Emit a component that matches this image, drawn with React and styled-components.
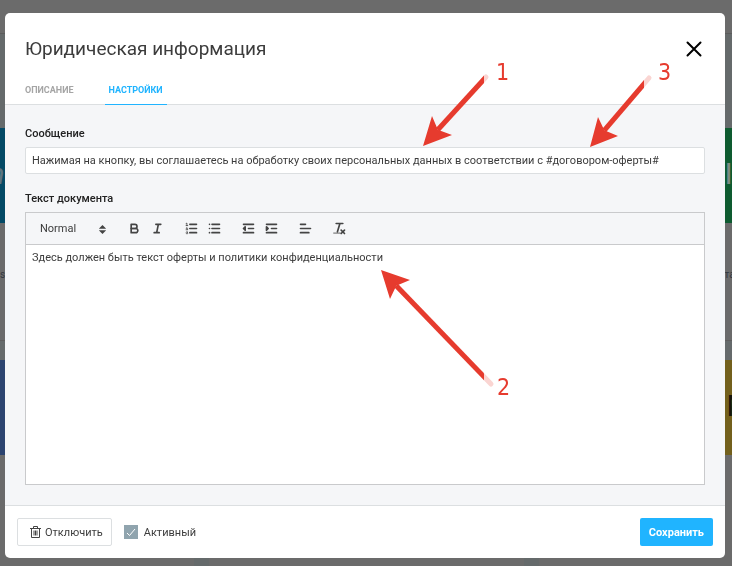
import { useState } from "react";
import styled, { createGlobalStyle } from "styled-components";

const COLORS = {
  accent: "#20b4ff",
  arrow: "#e63b2e",
  text: "#3c3c3c",
  panel: "#f5f6f8",
  line: "#dcdfe1",
  editorLine: "#c9cacc",
  backdrop: "#6b6b6b",
};

const courses = [
  { label: "n", caption: "as", color: "#044a66", ink: "#5d7580", italic: true },
  { color: "#6b6b6b" },
  { label: "IT", caption: "та", color: "#0e5b30", ink: "#7d8c83", offset: 186 },
  { caption: "к", color: "#2c4470" },
  { color: "#6b6b6b" },
  { label: "М", color: "#73601c", ink: "#17150a", offset: 188 },
];

const ARROWS = [
  { id: "arrow-message", tip: [418, 133], left: [427, 103], right: [447, 122], end: [481, 64], cut: 479 },
  { id: "arrow-offer", tip: [585, 134], left: [593, 104], right: [613, 123], end: [644, 65], cut: 639 },
  { id: "arrow-document", tip: [376, 257], left: [385, 286], right: [405, 267], end: [486, 371], cut: 479 },
];

const NECK = 22;

const NOTES = [
  { text: "1", x: 491, y: 47 },
  { text: "3", x: 653, y: 47 },
  { text: "2", x: 492, y: 362 },
];

function Arrow({ id, tip, left, right, end, cut }) {
  const dx = end[0] - tip[0];
  const dy = end[1] - tip[1];
  const ratio = NECK / Math.hypot(dx, dy);
  const neck = [tip[0] + dx * ratio, tip[1] + dy * ratio];
  const line = { x1: neck[0], y1: neck[1], x2: end[0], y2: end[1] };

  return (
    <g>
      <clipPath id={id}>
        <rect x="0" y="0" width={cut} height="545" />
      </clipPath>
      <line {...line} stroke="#fad5d2" strokeWidth="5" strokeLinecap="round" />
      <line {...line} stroke={COLORS.arrow} strokeWidth="5" clipPath={`url(#${id})`} />
      <polygon points={[tip, left, neck, right].join(" ")} fill={COLORS.arrow} />
    </g>
  );
}

function App() {
  const [tab, setTab] = useState("settings");
  const [active, setActive] = useState(true);

  return (
    <>
      <GlobalStyle />
      <Page aria-hidden="true">
        <TopBar />
        <Courses>
          {courses.map((course, index) => (
            <Course key={index}>
              <Cover $color={course.color} $ink={course.ink} $offset={course.offset} $italic={course.italic}>
                {course.label}
              </Cover>
              <Caption $offset={course.offset}>{course.caption}</Caption>
            </Course>
          ))}
        </Courses>
      </Page>
      <Overlay>
        <Modal role="dialog" aria-labelledby="modal-title">
          <Header>
            <TitleRow>
              <Title id="modal-title">Юридическая информация</Title>
              <CloseButton type="button" aria-label="Закрыть">
                <svg width="16" height="16" viewBox="0 0 16 16" stroke="#000" strokeWidth="2" strokeLinecap="round">
                  <path d="M1.5 1.5l13 13M14.5 1.5l-13 13" />
                </svg>
              </CloseButton>
            </TitleRow>
            <Tabs role="tablist">
              <Tab type="button" role="tab" $active={tab === "about"} onClick={() => setTab("about")}>
                Описание
              </Tab>
              <Tab type="button" role="tab" $active={tab === "settings"} onClick={() => setTab("settings")}>
                Настройки
              </Tab>
            </Tabs>
          </Header>
          <Body>
            <Label htmlFor="message">Сообщение</Label>
            <Input
              id="message"
              defaultValue="Нажимая на кнопку, вы соглашаетесь на обработку своих персональных данных в соответствии с #договором-оферты#"
            />
            <Label htmlFor="document">Текст документа</Label>
            <Toolbar>
              <FormatWrapper>
                <Format aria-label="Формат">
                  <option>Normal</option>
                </Format>
                <Picker viewBox="0 0 18 18">
                  <polygon points="7 11 9 13 11 11 7 11" />
                  <polygon points="7 7 9 5 11 7 7 7" />
                </Picker>
              </FormatWrapper>
              <Group>
                <Tool type="button" aria-label="Жирный">
                  <Icon viewBox="0 0 18 18">
                    <path d="M5,4H9.5A2.5,2.5,0,0,1,12,6.5v0A2.5,2.5,0,0,1,9.5,9H5A0,0,0,0,1,5,9V4A0,0,0,0,1,5,4Z" />
                    <path d="M5,9h5.5A2.5,2.5,0,0,1,13,11.5v0A2.5,2.5,0,0,1,10.5,14H5a0,0,0,0,1,0,0V9A0,0,0,0,1,5,9Z" />
                  </Icon>
                </Tool>
                <Tool type="button" aria-label="Курсив">
                  <Icon viewBox="0 0 18 18">
                    <path d="M7 4h6M5 14h6M8 14l2-10" />
                  </Icon>
                </Tool>
              </Group>
              <Group>
                <Tool type="button" aria-label="Нумерованный список">
                  <Icon viewBox="0 0 18 18">
                    <path d="M7 4h8M7 9h8M7 14h8" />
                    <path strokeWidth="1" d="M2.5 5.5h2M3.5 5.5v-3l-1 .5M2.5 10.5h2c0-1.3-1.9-.9-1.9-1.9 0-.9 1.8-.9 1.8.1M2.5 14.7c0 1 2 1 2 0 0-.5-.4-.7-1-.7.6 0 .9-.3.9-.7 0-.8-1.8-.8-1.8 0" />
                  </Icon>
                </Tool>
                <Tool type="button" aria-label="Маркированный список">
                  <Icon viewBox="0 0 18 18">
                    <path d="M6 4h9M6 9h9M6 14h9M3 4h0M3 9h0M3 14h0" />
                  </Icon>
                </Tool>
              </Group>
              <Group>
                <Tool type="button" aria-label="Уменьшить отступ">
                  <Icon viewBox="0 0 18 18">
                    <path d="M3 14h12M3 4h12M9 9h6" />
                    <polygon fill="#444" points="5 7 5 11 3 9 5 7" />
                  </Icon>
                </Tool>
                <Tool type="button" aria-label="Увеличить отступ">
                  <Icon viewBox="0 0 18 18">
                    <path d="M3 14h12M3 4h12M9 9h6" />
                    <polygon fill="#444" points="3 7 3 11 5 9 3 7" />
                  </Icon>
                </Tool>
              </Group>
              <Group>
                <Tool type="button" aria-label="Выравнивание">
                  <Icon viewBox="0 0 18 18">
                    <path d="M3 9h12M3 14h10M3 4h6" />
                  </Icon>
                </Tool>
              </Group>
              <Group>
                <Tool type="button" aria-label="Очистить формат">
                  <Icon viewBox="0 0 18 18">
                    <path d="M5 3h8M6.5 13L9.5 3M11 11l4 4M15 11l-4 4" />
                    <path strokeWidth="1" d="M2 14.5h8" />
                  </Icon>
                </Tool>
              </Group>
            </Toolbar>
            <Editor id="document" defaultValue="Здесь должен быть текст оферты и политики конфиденциальности" />
          </Body>
          <Footer>
            <DisableButton type="button">
              <svg width="11" height="12" viewBox="0 0 11 12" fill="none" stroke="#444">
                <path d="M0 2.5h11M3.5 2V.5h4V2M1.500 2.500v9h8v-9M4 4.500v5M5.500 4.500v5M7 4.500v5" />
              </svg>
              Отключить
            </DisableButton>
            <CheckLabel>
              <Checkbox type="checkbox" checked={active} onChange={() => setActive(!active)} />
              <CheckMark viewBox="0 0 14 14">
                <path d="M3 8l2.500 2.500L11 4" />
              </CheckMark>
              Активный
            </CheckLabel>
            <SaveButton type="button">Сохранить</SaveButton>
          </Footer>
          <Arrows viewBox="0 0 720 545">
            {ARROWS.map((arrow) => (
              <Arrow key={arrow.id} {...arrow} />
            ))}
          </Arrows>
          {NOTES.map(({ text, x, y }) => (
            <Note key={text} $x={x} $y={y}>
              {text}
            </Note>
          ))}
        </Modal>
      </Overlay>
    </>
  );
}

const GlobalStyle = createGlobalStyle`
  * {
    box-sizing: border-box;
  }

  body {
    margin: 0;
    font-family: Roboto, "Liberation Sans", sans-serif;
    font-size: 11px;
    color: ${COLORS.text};
    background-color: ${COLORS.backdrop};
  }

  button, input, select, textarea {
    font: inherit;
    color: inherit;
  }
`;

const Page = styled.div`
  height: 100vh;
  overflow: hidden;
  background-color: #656a6b;
`;

const TopBar = styled.div`
  height: 34px;
  background-color: ${COLORS.backdrop};
  border-bottom: 1px solid #5c5c5c;
`;

const Courses = styled.div`
  display: grid;
  grid-template-columns: repeat(3, 315px);
  gap: 19px 15px;
  justify-content: center;
  padding-top: 94px;
`;

const Course = styled.div`
  height: 213px;
  background-color: ${COLORS.backdrop};
  border-bottom: 1px solid #5e5e5e;
`;

const Cover = styled.div`
  height: 95px;
  padding-top: 28px;
  padding-left: ${(props) => props.$offset || 110}px;
  background-color: ${(props) => props.$color};
  color: ${(props) => props.$ink};
  font-size: 30px;
  font-style: ${(props) => (props.$italic ? "italic" : "normal")};
`;

const Caption = styled.div`
  padding-top: 46px;
  padding-left: ${(props) => props.$offset || 116}px;
  font-size: 10px;
  color: #34383f;
`;

const Overlay = styled.div`
  position: fixed;
  inset: 0;
  padding: 13px 7px 8px 5px;
  overflow: auto;
`;

const Modal = styled.section`
  position: relative;
  background-color: #fff;
  border-radius: 5px;
  overflow: hidden;
`;

const Header = styled.header`
  padding: 20px 20px 0;
  border-bottom: 1px solid ${COLORS.line};
`;

const TitleRow = styled.div`
  display: flex;
  align-items: center;
  justify-content: space-between;
  height: 32px;
`;

const Title = styled.h1`
  margin: 0;
  font-size: 19px;
  line-height: 24px;
  font-weight: 400;
`;

const CloseButton = styled.button`
  display: flex;
  padding: 3px;
  border: none;
  background: none;
  cursor: pointer;
`;

const Tabs = styled.div`
  display: flex;
  gap: 27px;
  margin: 11px 0 -1px -4px;
`;

const Tab = styled.button`
  height: 29px;
  padding: 0 4px;
  border: none;
  border-bottom: 1px solid ${(props) => (props.$active ? COLORS.accent : "transparent")};
  background: none;
  color: ${(props) => (props.$active ? COLORS.accent : "#a5a5a5")};
  font-size: 9px;
  font-weight: 700;
  text-transform: uppercase;
  cursor: pointer;
`;

const Body = styled.div`
  padding: 20px;
  background-color: ${COLORS.panel};
`;

const Label = styled.label`
  display: block;
  margin-bottom: 4px;
  line-height: 18px;
  font-weight: 500;
  color: #222;
`;

const Input = styled.input`
  display: block;
  width: 100%;
  height: 27px;
  margin-bottom: 16px;
  padding: 0 6px;
  border: 1px solid ${COLORS.line};
  border-radius: 2px;
  background-color: #fff;
`;

const Toolbar = styled.div`
  display: flex;
  align-items: center;
  height: 33px;
  padding: 0 8px;
  border: 1px solid ${COLORS.editorLine};
`;

const FormatWrapper = styled.div`
  position: relative;
  width: 79px;
  margin-right: 10px;
`;

const Format = styled.select`
  width: 100%;
  padding: 0 6px;
  border: none;
  background: none;
  appearance: none;
`;

const Picker = styled.svg`
  position: absolute;
  top: 0;
  right: 3px;
  width: 15px;
  height: 15px;
  fill: #444;
  stroke: #444;
  stroke-width: 2;
  pointer-events: none;
`;

const Group = styled.div`
  display: flex;
  margin-right: 11px;
`;

const Tool = styled.button`
  display: flex;
  width: 23px;
  padding: 4px;
  border: none;
  background: none;
  cursor: pointer;
`;

const Icon = styled.svg`
  width: 15px;
  height: 15px;
  fill: none;
  stroke: #444;
  stroke-width: 2;
  stroke-linecap: round;
  stroke-linejoin: round;
`;

const Editor = styled.textarea`
  display: block;
  width: 100%;
  height: 240px;
  padding: 5px 6px;
  border: 1px solid ${COLORS.editorLine};
  border-top: none;
  background-color: #fff;
  line-height: 16px;
  resize: none;
`;

const Footer = styled.footer`
  display: flex;
  align-items: center;
  padding: 12px;
  border-top: 1px solid ${COLORS.line};
`;

const DisableButton = styled.button`
  display: flex;
  align-items: center;
  gap: 4px;
  height: 28px;
  padding: 0 8px 0 12px;
  border: 1px solid ${COLORS.line};
  border-radius: 2px;
  background-color: #fff;
  cursor: pointer;
`;

const CheckLabel = styled.label`
  position: relative;
  display: flex;
  align-items: center;
  gap: 6px;
  margin-left: 12px;
`;

const Checkbox = styled.input`
  width: 14px;
  height: 14px;
  margin: 0;
  appearance: none;
  border: 1px solid #90a4ae;

  &:checked {
    background-color: #90a4ae;
  }
`;

const CheckMark = styled.svg`
  position: absolute;
  left: 0;
  width: 14px;
  height: 14px;
  fill: none;
  stroke: #fff;
  pointer-events: none;
`;

const SaveButton = styled.button`
  height: 28px;
  margin-left: auto;
  padding: 0 9px;
  border: none;
  border-radius: 2px;
  background-color: ${COLORS.accent};
  color: #fff;
  font-weight: 700;
  cursor: pointer;
`;

const Arrows = styled.svg`
  position: absolute;
  top: 0;
  left: 0;
  width: 720px;
  height: 545px;
  pointer-events: none;
`;

const Note = styled.span`
  position: absolute;
  left: ${(props) => props.$x}px;
  top: ${(props) => props.$y}px;
  font-family: "DejaVu Sans Condensed", "DejaVu Sans", sans-serif;
  font-size: 23px;
  line-height: 24px;
  color: ${COLORS.arrow};
`;

export default App;
